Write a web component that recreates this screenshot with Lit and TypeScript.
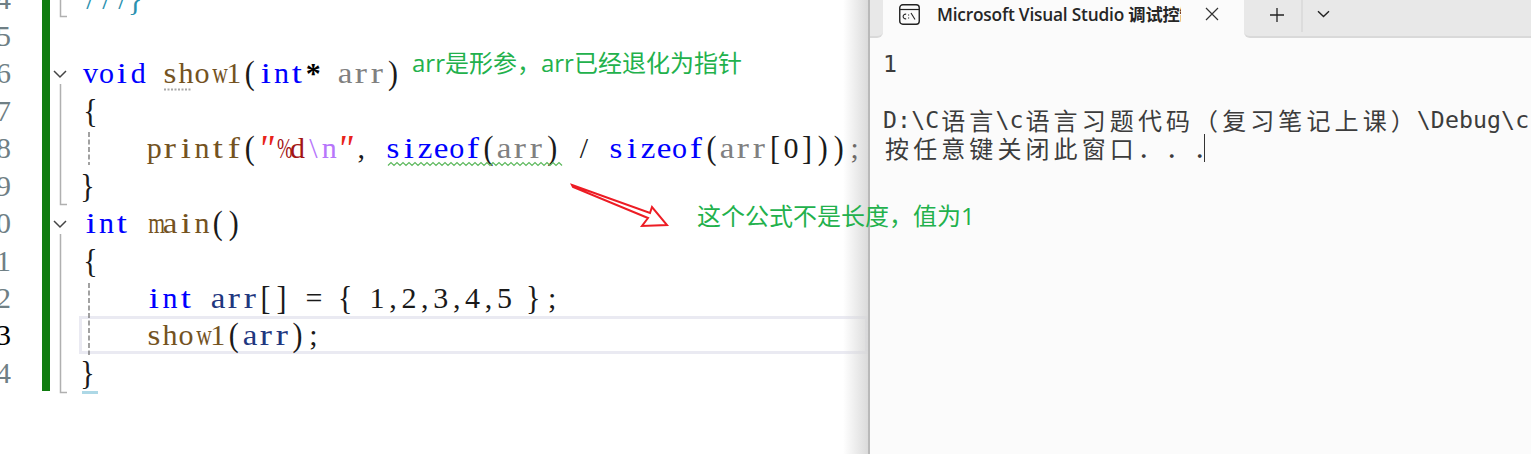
import { LitElement, html, css, svg } from "lit";
import { customElement } from "lit/decorators.js";

type Tok = [string, string];

const glyphClass = (ch: string) => {
  if (ch === "%") return "sq2";
  if ("mwMW".includes(ch)) return "squeeze";
  if ("irtfjl".includes(ch)) return "wide";
  if ("asecz".includes(ch)) return "wide1";
  if (ch === "}") return "tall rb";
  if (ch === '"') return "quote";
  if ("()[]{".includes(ch)) return "tall";
  return "";
};

const cells = (toks: Tok[]) =>
  toks.map(([cls, text]) =>
    [...text].map((ch) => html`<span class="cell ${cls} ${glyphClass(ch)}">${ch}</span>`)
  );

const LINES: { n: number; toks: Tok[]; cls?: string }[] = [
  { n: 14, toks: [["cm", "///}"]] },
  { n: 15, toks: [] },
  { n: 16, toks: [["kw", "void"], ["", " "], ["fn", "show1"], ["pl", "("], ["kw", "int"], ["op", "*"], ["", " "], ["pa", "arr"], ["pl", ")"]] },
  { n: 17, toks: [["pl", "{"]] },
  { n: 18, toks: [["", "    "], ["fn", "printf"], ["pl", "("], ["qt", '"'], ["st", "%d"], ["es", "\\n"], ["qt", '"'], ["pl", ","], ["", " "], ["kw", "sizeof"], ["pl", "("], ["pa", "arr"], ["pl", ")"], ["", " "], ["pl", "/"], ["", " "], ["kw", "sizeof"], ["pl", "("], ["pa", "arr"], ["pl", "["], ["pl", "0"], ["pl", "]))"], ["pl", ";"]] },
  { n: 19, toks: [["pl", "}"]] },
  { n: 20, toks: [["kw", "int"], ["", " "], ["fn", "main"], ["pl", "()"]] },
  { n: 21, toks: [["pl", "{"]] },
  { n: 22, toks: [["", "    "], ["kw", "int"], ["", " "], ["lo", "arr"], ["pl", "[]"], ["", " "], ["pl", "="], ["", " "], ["pl", "{"], ["", " "], ["pl", "1,2,3,4,5"], ["", " "], ["pl", "};"]] },
  { n: 23, cls: "current", toks: [["", "    "], ["fn", "show1"], ["pl", "("], ["lo", "arr"], ["pl", ");"]] },
  { n: 24, toks: [["pl", "}"]] },
];

const conCells = (text: string) =>
  [...text].map((ch) =>
    ch.charCodeAt(0) > 255
      ? html`<span class="full">${ch}</span>`
      : html`<span class="half">${ch}</span>`
  );

const squiggle = () => {
  let pts = "";
  for (let i = 0; i <= 58; i++) pts += `${388 + i * 3},${i % 2 ? 162.5 : 165.5} `;
  return svg`<polyline points=${pts} fill="none" stroke="#5cb85c" stroke-width="1.2"/>`;
};

@customElement("app-root")
export class AppRoot extends LitElement {
  static styles = css`
    :host { display: block; width: 1531px; height: 454px; overflow: hidden; position: relative; background: #fff; }
    .page { display: flex; height: 454px; }
    .editor { flex: 0 0 868px; height: 454px; overflow: hidden; position: relative; background: #fff; }
    .lines { margin-top: -20.5px; display: flex; flex-direction: column; }
    .row { display: flex; height: 37.45px; flex: none; font: 30px/37.45px "Liberation Serif", serif; }
    .num { flex: none; width: 11px; display: flex; justify-content: flex-end; overflow: hidden; color: #6f7f85; }
    .num span { flex: none; }
    .row.current .num { color: #000; }
    .bar { flex: none; width: 8px; margin-left: 31px; background: #107c10; }
    .fold { flex: none; width: 32.5px; }
    .code { flex: 1; display: flex; white-space: pre; position: relative; }
    .row.current .code { margin-left: -3.5px; padding-left: 3.5px; box-shadow: inset 0 0 0 3px #eaeaf2; }
    .cell { flex: none; display: inline-block; width: 15.93px; text-align: center; }
    .squeeze { transform: scaleX(0.72); }
    .sq2 { transform: scaleX(0.62); }
    .wide { transform: scaleX(1.22); }
    .wide1 { transform: scaleX(1.1); }
    .tall { transform: scaleY(1.12); }
    .rb { transform: translateX(-3px) scaleY(1.12); }
    .quote { transform: scale(1.25); }
    .kw { color: #0000ff; }
    .fn { color: #74531f; }
    .pa { color: #808080; }
    .lo { color: #1f377f; }
    .pl { color: #1a1a1a; }
    .op { color: #000; font-weight: 700; }
    .st { color: #a31515; }
    .es { color: #b776fb; }
    .qt { color: #e8231a; font-style: italic; }
    .cm { color: #2b91af; }
    .marks { position: absolute; left: 0; top: 0; pointer-events: none; }
    .console { flex: 1; height: 454px; position: relative; background: #fbfbfb; border-left: 2px solid #b9b9b9; }
    .console::before { content: ""; position: absolute; left: -27px; width: 25px; top: 0; bottom: 0; background: linear-gradient(to right, rgba(215,215,215,0), rgba(215,215,215,0.9)); }
    .strip { height: 38px; display: flex; align-items: stretch; }
    .lead { flex: none; width: 13px; box-sizing: border-box; background: #e8e8e8; border-bottom: 2px solid #d9d9d9; border-bottom-right-radius: 6px; }
    .rest { flex: 1; box-sizing: border-box; display: flex; align-items: flex-start; background: #e8e8e8; border-bottom: 2px solid #d9d9d9; border-bottom-left-radius: 6px; }
    .tab { flex: none; width: 361px; background: #fbfbfb; display: flex; align-items: flex-start; box-sizing: border-box; padding: 4px 0 0 16px; }
    .tab svg.ic { flex: none; width: 21px; height: 21px; }
    .title { flex: none; width: 244px; margin-left: 17px; overflow: hidden; white-space: nowrap; font: 600 17.3px/21px "Open Sans", "Noto Sans CJK SC", sans-serif; letter-spacing: -0.2px; color: #262626; }
    .x { flex: none; margin: 3px 0 0 24px; width: 14px; height: 14px; }
    .plus { flex: none; margin: 7px 0 0 25px; width: 16px; height: 16px; }
    .sep { flex: none; width: 2px; height: 32px; margin-left: 16px; background: #dcdcdc; }
    .chev { flex: none; margin: 10px 0 0 14px; width: 13px; height: 8px; }
    .out { padding: 12px 0 0 13px; font: 23.2px/28px "DejaVu Sans Mono", "Noto Sans CJK SC", monospace; color: #3c3c3c; }
    .ln { height: 28px; display: flex; position: relative; white-space: pre; }
    .half { flex: none; display: inline-block; width: 14.05px; height: 28px; text-align: center; }
    .full { flex: none; display: inline-block; width: 28.1px; height: 28px; line-height: 28px; text-align: center; font-family: "Noto Sans CJK SC", sans-serif; font-size: 24px; }
    .cursor { flex: none; width: 1px; height: 28px; background: #333; margin-left: -16px; }
    .note { position: absolute; white-space: nowrap; color: #22b14c; font: 24px/30px "Noto Sans CJK SC", sans-serif; z-index: 3; }
    .n1 { left: 412px; top: 47px; }
    .n2 { left: 697px; top: 200px; }
    .arrow { position: absolute; left: 0; top: 0; z-index: 3; pointer-events: none; }
    .latin { font-family: "Open Sans", "Noto Sans", sans-serif; }
  `;

  render() {
    return html`
      <div class="page">
        <div class="editor">
          <div class="lines">
            ${LINES.map(
              (l) => html`<div class="row ${l.cls ?? ""}">
                <div class="num"><span>${l.n}</span></div>
                <div class="bar"></div>
                <div class="fold"></div>
                <div class="code">${cells(l.toks)}</div>
              </div>`
            )}
          </div>
          <svg class="marks" width="868" height="454" fill="none">
            <path d="M60.5 0V16.5H67" stroke="#b0b0b0" stroke-width="1.5"/>
            <path d="M54 71L60 77L66 71" stroke="#444" stroke-width="1.5"/>
            <path d="M60.5 84V204.5H67" stroke="#b0b0b0" stroke-width="1.5"/>
            <path d="M54 221L60 227L66 221" stroke="#444" stroke-width="1.5"/>
            <path d="M60.5 234V392.5H67" stroke="#b0b0b0" stroke-width="1.5"/>
            <path d="M89 132V165" stroke="#707070" stroke-width="1.3" stroke-dasharray="5 2.5"/>
            <path d="M89 283V355" stroke="#707070" stroke-width="1.3" stroke-dasharray="5 2.5"/>
            <path d="M82 392.5H98" stroke="#add8e6" stroke-width="3"/>
            <path d="M164 89.5H191" stroke="#a8a8a8" stroke-width="2" stroke-dasharray="2 1.5"/>
            ${squiggle()}
          </svg>
        </div>
        <div class="console">
          <div class="strip">
            <div class="lead"></div>
            <div class="tab">
              <svg class="ic" viewBox="0 0 21 21" fill="none">
                <rect x="0.75" y="0.75" width="19.5" height="19.5" rx="3" stroke="#222" stroke-width="1.4"/>
                <path d="M1 5.5H20" stroke="#222" stroke-width="1.2"/>
                <path d="M7.2 10.2A2.4 2.4 0 1 0 7.2 14.8" stroke="#222" stroke-width="1.1"/>
                <path d="M9.6 10.5V11.5M9.6 13.6V14.6M12 9L16 15.5" stroke="#222" stroke-width="1.1"/>
              </svg>
              <div class="title">Microsoft Visual Studio 调试控制台</div>
              <svg class="x" viewBox="0 0 14 14" fill="none"><path d="M1 1L13 13M13 1L1 13" stroke="#333" stroke-width="1.2"/></svg>
            </div>
            <div class="rest">
              <svg class="plus" viewBox="0 0 16 16" fill="none"><path d="M8 1V15M1 8H15" stroke="#222" stroke-width="1.3"/></svg>
              <div class="sep"></div>
              <svg class="chev" viewBox="0 0 13 8" fill="none"><path d="M1 1.2L6.5 6.6L12 1.2" stroke="#222" stroke-width="1.4"/></svg>
            </div>
          </div>
          <div class="out">
            <div class="ln">${conCells("1")}</div>
            <div class="ln"></div>
            <div class="ln">${conCells("D:\\C语言\\c语言习题代码（复习笔记上课）\\Debug\\c语言")}</div>
            <div class="ln">${conCells("按任意键关闭此窗口．．．")}<span class="cursor"></span></div>
          </div>
        </div>
      </div>
      <div class="note n1"><span class="latin">arr</span>是形参，<span class="latin">arr</span>已经退化为指针</div>
      <div class="note n2">这个公式不是长度，值为<span class="latin">1</span></div>
      <svg class="arrow" width="1531" height="454" fill="none">
        <path d="M572 185L650 213L652 207L667 225L642 226L648 218L573 187Z" stroke="#ed1c24" stroke-width="2" stroke-linejoin="miter"/>
      </svg>
    `;
  }
}
